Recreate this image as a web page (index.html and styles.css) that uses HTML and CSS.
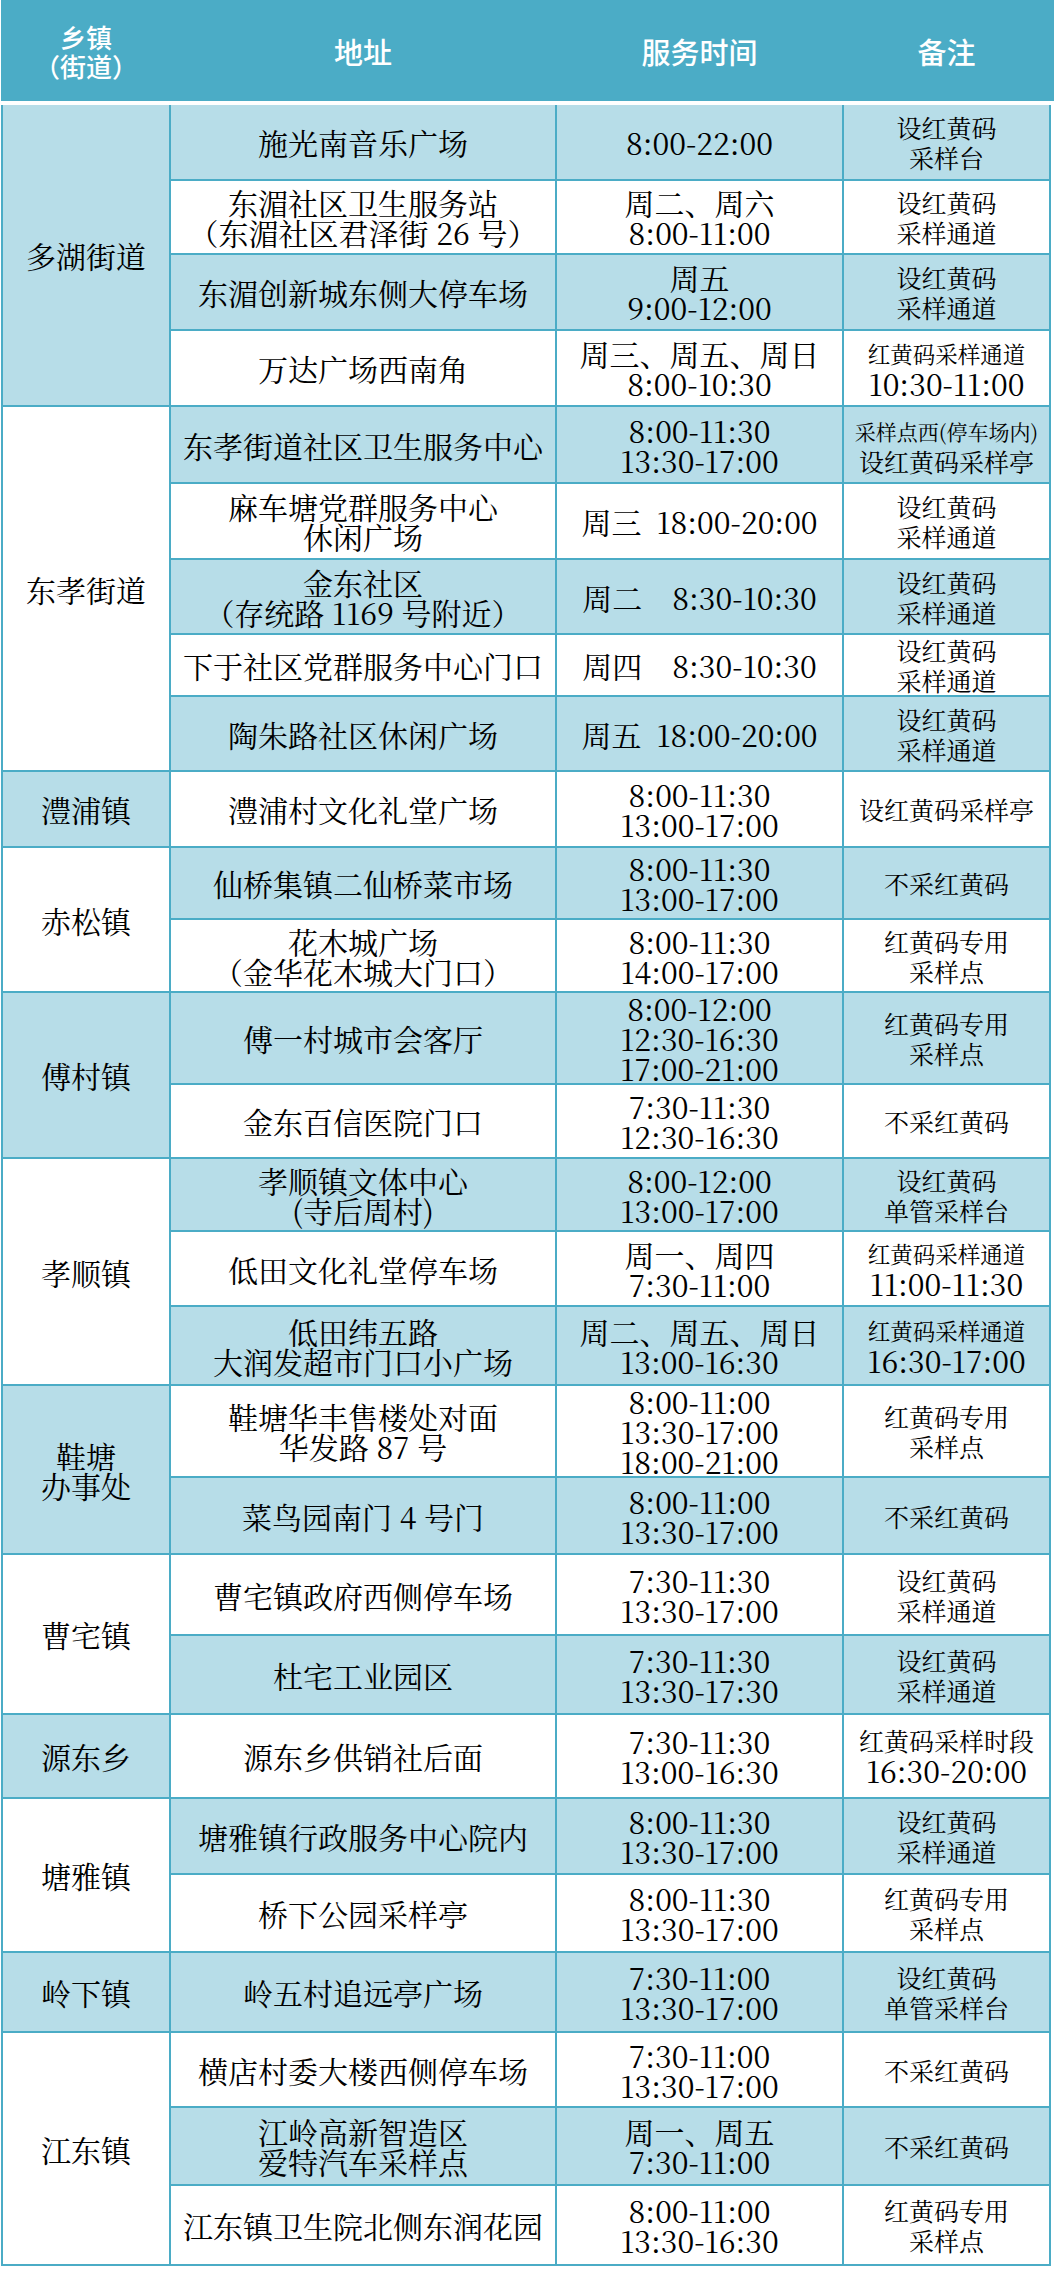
FILE: index.html
```html
<!DOCTYPE html>
<html lang="zh-CN">
<head>
<meta charset="utf-8">
<title>核酸采样点</title>
<link rel="stylesheet" href="styles.css">
</head>
<body>
<div class="page">
  <div class="head">
    <div class="hc hc-small">乡镇<br>（街道）</div>
    <div class="hc">地址</div>
    <div class="hc">服务时间</div>
    <div class="hc">备注</div>
  </div>
  <div class="table">
    <!-- 多湖街道 -->
    <div class="c grp l span4">多湖街道</div>
    <div class="c l">施光南音乐广场</div>
    <div class="c l">8:00-22:00</div>
    <div class="c l rm">设红黄码<br>采样台</div>

    <div class="c w">东湄社区卫生服务站<br>（东湄社区君泽街 26 号）</div>
    <div class="c w">周二、周六<br>8:00-11:00</div>
    <div class="c w rm">设红黄码<br>采样通道</div>

    <div class="c l">东湄创新城东侧大停车场</div>
    <div class="c l">周五<br>9:00-12:00</div>
    <div class="c l rm">设红黄码<br>采样通道</div>

    <div class="c w">万达广场西南角</div>
    <div class="c w">周三、周五、周日<br>8:00-10:30</div>
    <div class="c w rm"><div class="in"><span class="rs">红黄码采样通道</span><br><span class="rn">10:30-11:00</span></div></div>

    <!-- 东孝街道 -->
    <div class="c grp w span5">东孝街道</div>
    <div class="c l">东孝街道社区卫生服务中心</div>
    <div class="c l">8:00-11:30<br>13:30-17:00</div>
    <div class="c l rm"><div class="in"><span class="rxs">采样点西(停车场内)</span><br>设红黄码采样亭</div></div>

    <div class="c w">麻车塘党群服务中心<br>休闲广场</div>
    <div class="c w">周三&ensp;18:00-20:00</div>
    <div class="c w rm">设红黄码<br>采样通道</div>

    <div class="c l">金东社区<br>（存统路 1169 号附近）</div>
    <div class="c l">周二&ensp;&ensp;8:30-10:30</div>
    <div class="c l rm">设红黄码<br>采样通道</div>

    <div class="c w">下于社区党群服务中心门口</div>
    <div class="c w">周四&ensp;&ensp;8:30-10:30</div>
    <div class="c w rm">设红黄码<br>采样通道</div>

    <div class="c l">陶朱路社区休闲广场</div>
    <div class="c l">周五&ensp;18:00-20:00</div>
    <div class="c l rm">设红黄码<br>采样通道</div>

    <!-- 澧浦镇 -->
    <div class="c grp l">澧浦镇</div>
    <div class="c w">澧浦村文化礼堂广场</div>
    <div class="c w">8:00-11:30<br>13:00-17:00</div>
    <div class="c w rm">设红黄码采样亭</div>

    <!-- 赤松镇 -->
    <div class="c grp w span2">赤松镇</div>
    <div class="c l">仙桥集镇二仙桥菜市场</div>
    <div class="c l">8:00-11:30<br>13:00-17:00</div>
    <div class="c l rm">不采红黄码</div>

    <div class="c w">花木城广场<br>（金华花木城大门口）</div>
    <div class="c w">8:00-11:30<br>14:00-17:00</div>
    <div class="c w rm">红黄码专用<br>采样点</div>

    <!-- 傅村镇 -->
    <div class="c grp l span2">傅村镇</div>
    <div class="c l">傅一村城市会客厅</div>
    <div class="c l">8:00-12:00<br>12:30-16:30<br>17:00-21:00</div>
    <div class="c l rm">红黄码专用<br>采样点</div>

    <div class="c w">金东百信医院门口</div>
    <div class="c w">7:30-11:30<br>12:30-16:30</div>
    <div class="c w rm">不采红黄码</div>

    <!-- 孝顺镇 -->
    <div class="c grp w span3">孝顺镇</div>
    <div class="c l">孝顺镇文体中心<br>(寺后周村)</div>
    <div class="c l">8:00-12:00<br>13:00-17:00</div>
    <div class="c l rm">设红黄码<br>单管采样台</div>

    <div class="c w">低田文化礼堂停车场</div>
    <div class="c w">周一、周四<br>7:30-11:00</div>
    <div class="c w rm"><div class="in"><span class="rs">红黄码采样通道</span><br><span class="rn">11:00-11:30</span></div></div>

    <div class="c l">低田纬五路<br>大润发超市门口小广场</div>
    <div class="c l">周二、周五、周日<br>13:00-16:30</div>
    <div class="c l rm"><div class="in"><span class="rs">红黄码采样通道</span><br><span class="rn">16:30-17:00</span></div></div>

    <!-- 鞋塘办事处 -->
    <div class="c grp l span2">鞋塘<br>办事处</div>
    <div class="c w">鞋塘华丰售楼处对面<br>华发路 87 号</div>
    <div class="c w">8:00-11:00<br>13:30-17:00<br>18:00-21:00</div>
    <div class="c w rm">红黄码专用<br>采样点</div>

    <div class="c l">菜鸟园南门 4 号门</div>
    <div class="c l">8:00-11:00<br>13:30-17:00</div>
    <div class="c l rm">不采红黄码</div>

    <!-- 曹宅镇 -->
    <div class="c grp w span2">曹宅镇</div>
    <div class="c w">曹宅镇政府西侧停车场</div>
    <div class="c w">7:30-11:30<br>13:30-17:00</div>
    <div class="c w rm">设红黄码<br>采样通道</div>

    <div class="c l">杜宅工业园区</div>
    <div class="c l">7:30-11:30<br>13:30-17:30</div>
    <div class="c l rm">设红黄码<br>采样通道</div>

    <!-- 源东乡 -->
    <div class="c grp l">源东乡</div>
    <div class="c w">源东乡供销社后面</div>
    <div class="c w">7:30-11:30<br>13:00-16:30</div>
    <div class="c w rm"><div class="in">红黄码采样时段<br><span class="rn">16:30-20:00</span></div></div>

    <!-- 塘雅镇 -->
    <div class="c grp w span2">塘雅镇</div>
    <div class="c l">塘雅镇行政服务中心院内</div>
    <div class="c l">8:00-11:30<br>13:30-17:00</div>
    <div class="c l rm">设红黄码<br>采样通道</div>

    <div class="c w">桥下公园采样亭</div>
    <div class="c w">8:00-11:30<br>13:30-17:00</div>
    <div class="c w rm">红黄码专用<br>采样点</div>

    <!-- 岭下镇 -->
    <div class="c grp l">岭下镇</div>
    <div class="c l">岭五村追远亭广场</div>
    <div class="c l">7:30-11:00<br>13:30-17:00</div>
    <div class="c l rm">设红黄码<br>单管采样台</div>

    <!-- 江东镇 -->
    <div class="c grp w span3">江东镇</div>
    <div class="c w">横店村委大楼西侧停车场</div>
    <div class="c w">7:30-11:00<br>13:30-17:00</div>
    <div class="c w rm">不采红黄码</div>

    <div class="c l">江岭高新智造区<br>爱特汽车采样点</div>
    <div class="c l">周一、周五<br>7:30-11:00</div>
    <div class="c l rm">不采红黄码</div>

    <div class="c w">江东镇卫生院北侧东润花园</div>
    <div class="c w">8:00-11:00<br>13:30-16:30</div>
    <div class="c w rm">红黄码专用<br>采样点</div>
  </div>
</div>
</body>
</html>
```

FILE: styles.css
```css
html, body {
  margin: 0;
  padding: 0;
  background: #ffffff;
}

body {
  font-family: "Noto Serif CJK SC", "Noto Sans CJK SC", "Liberation Serif", serif;
  color: #000000;
}

.page {
  padding-left: 1px;
  width: 1053px;
}

.head {
  display: grid;
  grid-template-columns: 166px 384px 285px 205px;
  column-gap: 2px;
  padding: 0 2px;
  height: 101px;
  background: #4bacc6;
  margin-bottom: 4px;
}

.hc {
  display: flex;
  align-items: center;
  justify-content: center;
  text-align: center;
  color: #ffffff;
  font-family: "Noto Sans CJK SC", sans-serif;
  font-weight: 500;
  font-size: 29px;
  line-height: 30px;
}

.hc-small {
  font-size: 26px;
  line-height: 29px;
}

.table {
  display: grid;
  width: 1046px;
  grid-template-columns: 166px 384px 285px 205px;
  grid-template-rows:
    74px 72px 74px 74px
    75px 74px 73px 60px 73px
    74px
    70px 71px
    90px 72px
    71px 73px 77px
    90px 75px
    79px 77px
    82px
    74px 76px
    78px
    73px 76px 78px;
  gap: 2px;
  padding: 0 2px 2px 2px;
  background: #4bacc6;
}

.c {
  display: flex;
  align-items: center;
  justify-content: center;
  text-align: center;
  font-size: 30px;
  line-height: 30px;
  padding: 0 2px;
  white-space: nowrap;
}

.in {
  text-align: center;
}

.l { background: #b7dde8; }
.w { background: #ffffff; }

.span2 { grid-row: span 2; }
.span3 { grid-row: span 3; }
.span4 { grid-row: span 4; }
.span5 { grid-row: span 5; }

.rm {
  font-size: 25px;
}

.rs {
  font-size: 22.5px;
}

.rxs {
  font-size: 21px;
}

.rn {
  font-size: 30px;
}
```
